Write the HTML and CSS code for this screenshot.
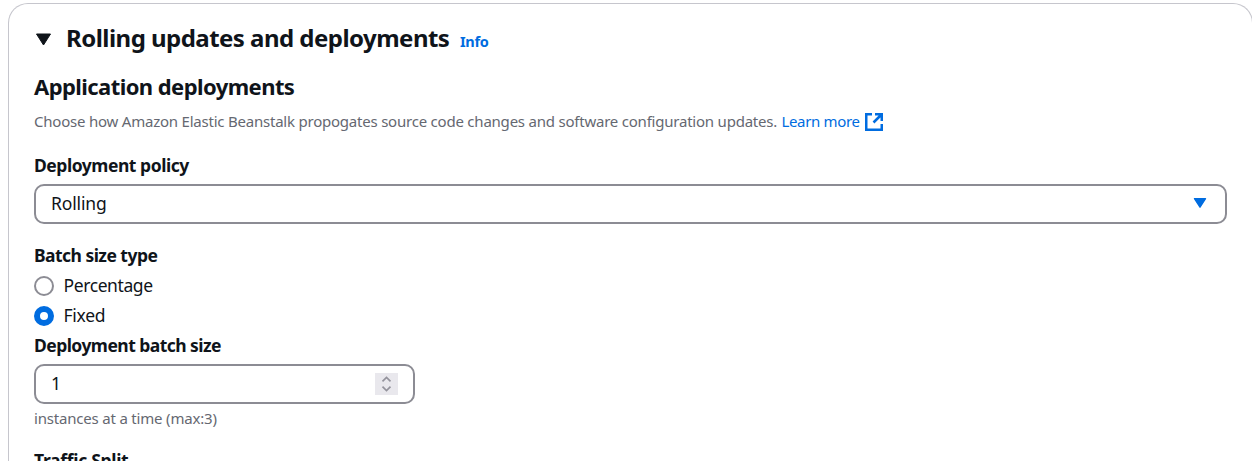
FILE: index.html
```html
<!DOCTYPE html>
<html lang="en">
<head>
<meta charset="utf-8">
<title>Rolling updates and deployments</title>
<link rel="stylesheet" href="styles.css">
</head>
<body>
<main class="panel">
  <header class="panel-header">
    <svg class="caret" width="17" height="13" viewBox="0 0 17 13"><path d="M1.5 1h14L8.5 12z" fill="#0f141a" stroke="#0f141a" stroke-linejoin="round"/></svg>
    <h2 class="panel-title"><span>Rolling updates and deployments</span></h2>
    <a class="info"><span>Info</span></a>
  </header>
  <h3 class="section-title"><span>Application deployments</span></h3>
  <p class="description"><span class="desc-text">Choose how Amazon Elastic Beanstalk propogates source code changes and software configuration updates.</span><a class="link"><span>Learn more</span></a><svg class="external" width="20" height="20" viewBox="0 0 20 20" fill="none" stroke="#006ce0" stroke-width="2.5"><path d="M8 2.25H2.25v15.5h15.5V12M11 2.25h6.75V9M17.5 2.5 9.5 10.5"/></svg></p>

  <div class="label policy-label"><span>Deployment policy</span></div>
  <div class="control select"><span class="value">Rolling</span><svg width="14" height="12" viewBox="0 0 14 12"><path d="M1.5 1.7h11L7 10.2z" fill="#006ce0" stroke="#006ce0" stroke-width="1.4" stroke-linejoin="round"/></svg></div>

  <div class="label type-label"><span>Batch size type</span></div>
  <div class="option"><i class="radio"></i><span class="percentage">Percentage</span></div>
  <div class="option"><i class="radio checked"></i><span class="fixed">Fixed</span></div>

  <div class="label size-label"><span>Deployment batch size</span></div>
  <div class="control number"><span class="value">1</span><span class="stepper"><svg width="23" height="22" viewBox="0 0 23 22" fill="none" stroke="#94939c" stroke-width="1.7"><path d="M7.5 8.3 11.5 4.4l4 3.9M7.5 13.7l4 3.9 4-3.9"/></svg></span></div>
  <div class="hint"><span>instances at a time (max:3)</span></div>
  <div class="label traffic-label"><span>Traffic Split</span></div>
</main>
</body>
</html>
```
FILE: styles.css
```css
* { box-sizing: border-box; }
html, body { height: 461px; overflow: hidden; }
body {
  margin: 0;
  padding: 3px 0 0 8px;
  background: #fff;
  color: #0f141a;
  font-family: "Noto Sans", "Open Sans", sans-serif;
  font-size: 17.5px;
}
h2, h3, p { margin: 0; }
.panel {
  width: 1245px;
  height: 458px;
  padding: 19px 25px 0;
  border: 1px solid #c6c6cd;
  border-bottom: 0;
  border-radius: 20px 20px 0 0;
  white-space: nowrap;
  overflow: hidden;
}
.panel-header { display: flex; height: 30px; align-items: center; }
.caret { margin: 2px 14px 0 1px; flex: none; }
.panel-title { width: 394px; font-size: 24px; line-height: 30px; font-weight: 700; letter-spacing: -0.53px; }
.info { color: #006ce0; font-size: 14.5px; font-weight: 700; line-height: 20px; padding-top: 6px; letter-spacing: -0.3px; }
.section-title { margin-top: 19px; font-size: 22px; line-height: 28px; letter-spacing: -0.57px; }
.description { display: flex; align-items: center; height: 25px; margin-top: 9px; color: #656871; font-size: 15px; line-height: 25px; letter-spacing: -0.22px; }
.desc-text { width: 747.5px; }
.link { width: 82.5px; color: #006ce0; letter-spacing: -0.35px; }
.label { height: 25px; line-height: 25px; font-weight: 700; letter-spacing: -0.54px; }
.policy-label { margin-top: 19px; letter-spacing: -0.46px; }
.control {
  display: flex;
  align-items: center;
  justify-content: space-between;
  height: 40px;
  border: 2px solid #8c8c94;
  border-radius: 10px;
}
.value { letter-spacing: -0.15px; padding-bottom: 2px; }
.select { width: 1193px; margin-top: 6px; padding: 0 18px 0 15px; }
.select svg { margin-bottom: 2px; }
.type-label { margin-top: 19px; }
.option { display: flex; align-items: center; height: 25px; margin-top: 5px; line-height: 23px; }
.percentage { letter-spacing: -0.4px; }
.fixed { letter-spacing: -0.25px; }
.radio { width: 20px; height: 20px; margin-right: 9.5px; border: 2px solid #8c8c94; border-radius: 50%; }
.radio.checked { border: 6px solid #006ce0; }
.size-label { margin-top: 5px; }
.number { width: 381px; margin-top: 6px; padding: 0 15px; }
.stepper { width: 23px; height: 22px; background: #e9e8ed; }
.stepper svg { display: block; }
.hint { margin-top: 4px; height: 20px; line-height: 20px; color: #656871; font-size: 15px; letter-spacing: -0.19px; }
.traffic-label { margin-top: 20px; letter-spacing: -0.3px; }
```
